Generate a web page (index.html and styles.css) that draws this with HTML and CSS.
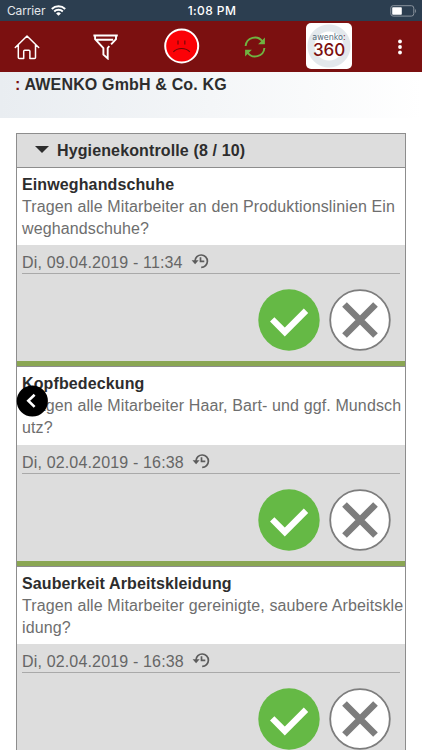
FILE: index.html
```html
<!DOCTYPE html>
<html lang="de">
<head>
    <meta charset="utf-8" />
    <meta name="viewport" content="width=device-width, initial-scale=1">
    <title>awenko:360</title>
    <link rel="stylesheet" href="styles.css">
</head>
<body>
    <!-- shared icons -->
    <svg class="symbols" width="0" height="0">
        <symbol id="history" viewBox="0 0 18 16">
            <path d="M4 8.5V8a6.2 6.2 0 1 1 6.2 6.4" fill="none" stroke="#5c5c5c" stroke-width="1.7" />
            <path d="M.6 7.3h7L4.1 11.2z" fill="#5c5c5c" />
            <path d="M9.5 4.2v4.2h3.8" fill="none" stroke="#5c5c5c" stroke-width="1.7" />
        </symbol>
        <symbol id="check" viewBox="0 0 62 62">
            <circle cx="31" cy="31" r="30.7" fill="#65b945" />
            <path d="M14.2 30.4l12.6 12.6L48 21.8" fill="none" stroke="#fff" stroke-width="6.2" />
        </symbol>
        <symbol id="cross" viewBox="0 0 62 62">
            <circle cx="31" cy="31" r="29.8" fill="#fff" stroke="#7d7d7d" stroke-width="1.8" />
            <path d="M15.5 15.5l31 31M46.5 15.5l-31 31" fill="none" stroke="#7d7d7d" stroke-width="6.6" />
        </symbol>
    </svg>

    <div id="statusbar">
        <span class="carrier">Carrier
            <svg width="15" height="11" viewBox="0 0 15 11">
                <g fill="none" stroke="#fff" stroke-width="1.9">
                    <path d="M.8 4a9.5 9.5 0 0 1 13.4 0" />
                    <path d="M3.2 6.5a6.1 6.1 0 0 1 8.6 0" />
                </g>
                <path d="M7.5 10.8L5.1 8.4a3.4 3.4 0 0 1 4.8 0z" fill="#fff" />
            </svg>
        </span>
        <span class="time">1:08 PM</span>
        <svg class="battery" width="27" height="12" viewBox="0 0 27 12">
            <rect x=".8" y=".7" width="23" height="10.4" rx="2.4" fill="none" stroke="#8b949e" stroke-width="1" />
            <rect x="2.2" y="2.2" width="9.6" height="7.5" rx=".8" fill="#fff" />
            <path d="M25.2 4v4c1.2-.5 1.2-3.5 0-4z" fill="#8b949e" />
        </svg>
    </div>

    <div id="toolbar">
        <svg width="26" height="26" viewBox="0 0 26 26">
            <path d="M1.3 13.5L13 2l11.7 11.5M4.3 11.2v12.3q0 1 1 1h4.4v-7.2q0-1 1-1h4.2q1 0 1 1v7.2h4.6q1 0 1-1V11.2" fill="none" stroke="#fff" stroke-width="1.5" stroke-linecap="round" stroke-linejoin="round" />
        </svg>
        <svg width="26" height="26" viewBox="0 0 26 26">
            <path d="M.4 1.5h24.4M3.4 5.7h16.8M2.1 1.5v3.6l8.3 8.9v6.6l4.3 3.8V14l1.6-1.9M23 1.5v3.6l-4.9 5.2" fill="none" stroke="#fff" stroke-width="1.9" />
        </svg>
        <svg class="mood" width="36" height="36" viewBox="0 0 36 36">
            <circle cx="17.7" cy="18" r="16.5" fill="#fb0207" stroke="#fff" stroke-width="2" />
            <path d="M9.4 23.8c4-4.5 12.4-4.5 16.4 0" fill="none" stroke="#6d0808" stroke-width="1.1" />
            <path d="M14 12.5v4M20.8 12.5v4" stroke="#8b0508" stroke-width="1.4" />
        </svg>
        <svg width="22" height="22" viewBox="0 0 22 22">
            <path d="M1.6 10A9.3 9.3 0 0 1 18.5 5.5M20.4 12A9.3 9.3 0 0 1 3.5 16.5" fill="none" stroke="#6fb341" stroke-width="1.9" />
            <path d="M20.9 1.5v6.8h-6.8zM1.1 20.5v-6.8h6.8z" fill="#6fb341" />
        </svg>
        <div class="logo">
            <span class="brand">awenko<b>:</b></span>
            <span class="number">360</span>
        </div>
        <svg width="4" height="16" viewBox="0 0 4 16">
            <g fill="#fff">
                <circle cx="2" cy="2.5" r="1.9" />
                <circle cx="2" cy="8" r="1.9" />
                <circle cx="2" cy="13.5" r="1.9" />
            </g>
        </svg>
    </div>

    <div id="company"><span>:</span> AWENKO GmbH &amp; Co. KG</div>

    <div id="checklist">
        <h1><span class="arrow"></span>Hygienekontrolle (8 / 10)</h1>

        <div class="item">
            <div class="question">
                <h2>Einweghandschuhe</h2>
                <p>Tragen alle Mitarbeiter an den Produktionslinien Ein<br>weghandschuhe?</p>
            </div>
            <div class="answer">
                <div class="date"><span>Di, 09.04.2019 - 11:34</span><svg><use href="#history" /></svg></div>
                <div class="buttons">
                    <svg><use href="#check" /></svg>
                    <svg><use href="#cross" /></svg>
                </div>
            </div>
        </div>

        <div class="item">
            <div class="question">
                <h2>Kopfbedeckung</h2>
                <p>Tragen alle Mitarbeiter Haar, Bart- und ggf. Mundsch<br>utz?</p>
            </div>
            <div class="answer">
                <div class="date"><span>Di, 02.04.2019 - 16:38</span><svg><use href="#history" /></svg></div>
                <div class="buttons">
                    <svg><use href="#check" /></svg>
                    <svg><use href="#cross" /></svg>
                </div>
            </div>
        </div>

        <div class="item">
            <div class="question">
                <h2>Sauberkeit Arbeitskleidung</h2>
                <p>Tragen alle Mitarbeiter gereinigte, saubere Arbeitskle<br>idung?</p>
            </div>
            <div class="answer">
                <div class="date"><span>Di, 02.04.2019 - 16:38</span><svg><use href="#history" /></svg></div>
                <div class="buttons">
                    <svg><use href="#check" /></svg>
                    <svg><use href="#cross" /></svg>
                </div>
            </div>
        </div>
    </div>

    <!-- floating back button -->
    <svg class="back" width="32" height="32" viewBox="0 0 32 32">
        <circle cx="16.3" cy="16" r="15.6" fill="#000" />
        <path d="M18.6 9.7l-6.3 6.1 6.3 6.1" fill="none" stroke="#fff" stroke-width="2.6" />
    </svg>
</body>
</html>
```
FILE: styles.css
```css
*, *:before, *:after{
    box-sizing:border-box;
}
html,
body{
    height:750px;
    overflow:hidden;
}
body{
    position:relative;
    margin:0;
    background:#fff;
    color:#2d2d2d;
    font-family:"Liberation Sans", Arial, sans-serif;
    font-size:16px;
}
svg{
    display:block;
    flex:none;
}
.symbols{
    position:absolute;
}
#statusbar{
    display:grid;
    grid-template-columns:1fr auto 1fr;
    align-items:center;
    height:21px;
    padding:0 5px 0 7px;
    background:#2c3e50;
    color:#fff;
    font-family:Inter, sans-serif;
    font-size:12px;
}
.carrier{
    display:flex;
    align-items:center;
    gap:6px;
    color:#e4e7ea;
    letter-spacing:-0.15px;
}
.time{
    font-weight:500;
    letter-spacing:0.4px;
}
.battery{
    justify-self:end;
}
#toolbar{
    display:grid;
    grid-template-columns:79px 71px 80px 62px 92px 4px;
    align-items:center;
    height:51px;
    padding-left:14px;
    background:#7b1010;
}
.mood{
    margin-top:-2px;
}
.logo{
    display:flex;
    flex-direction:column;
    align-items:center;
    width:46px;
    height:46px;
    margin-top:-2px;
    padding-top:10px;
    border-radius:5px;
    background:radial-gradient(circle, #fff 14px, #e3e8ec 15px, #e3e8ec 21px, #fff 22px);
    white-space:nowrap;
}
.brand{
    font:8px/9px "DejaVu Sans", sans-serif;
    color:#536b7b;
}
    .brand b{
        color:#7b1010;
        font-weight:normal;
    }
.number{
    margin-top:1px;
    font:500 17px/14px Inter, sans-serif;
    letter-spacing:-0.1px;
    color:#7b1010;
}
#company{
    height:46px;
    padding:3px 0 0 15px;
    background:linear-gradient(to right, #e9edf1, #fff);
    font-size:16px;
    font-weight:bold;
    line-height:20px;
    letter-spacing:0.16px;
}
    #company span{
        color:#7b1010;
    }
#checklist{
    margin:15px 16px 0;
    border:1px solid #8d8d8d;
}
h1{
    display:flex;
    align-items:center;
    gap:8px;
    height:32.5px;
    margin:0;
    padding:1px 0 0 18px;
    background:#ddd;
    font-size:16px;
    letter-spacing:0.13px;
}
.arrow{
    margin-top:-3px;
    border:7px solid transparent;
    border-top-color:#2d2d2d;
    border-bottom:0;
}
.item{
    height:199.5px;
    border-top:1px solid #8d8d8d;
}
.question{
    height:77.5px;
    padding:6px 0 0 5px;
}
h2{
    margin:0;
    font-size:16px;
    line-height:22px;
    letter-spacing:0.12px;
}
p{
    margin:0;
    color:#6e6e6e;
    line-height:22px;
    letter-spacing:0.12px;
    white-space:nowrap;
}
.answer{
    height:121px;
    padding:6px 5px 0;
    border-bottom:5px solid #8aa653;
    background:#ddd;
}
.date{
    display:flex;
    gap:8px;
    height:23px;
    border-bottom:1px solid #a9a9a9;
    color:#666;
    line-height:24px;
    letter-spacing:0.16px;
}
    .date svg{
        width:18px;
        height:16px;
        margin-top:2px;
    }
.buttons{
    display:flex;
    justify-content:flex-end;
    gap:9px;
    padding:15px 9px 0 0;
}
    .buttons svg{
        width:62px;
        height:62px;
    }
.back{
    position:absolute;
    left:16px;
    top:385px;
}
```
